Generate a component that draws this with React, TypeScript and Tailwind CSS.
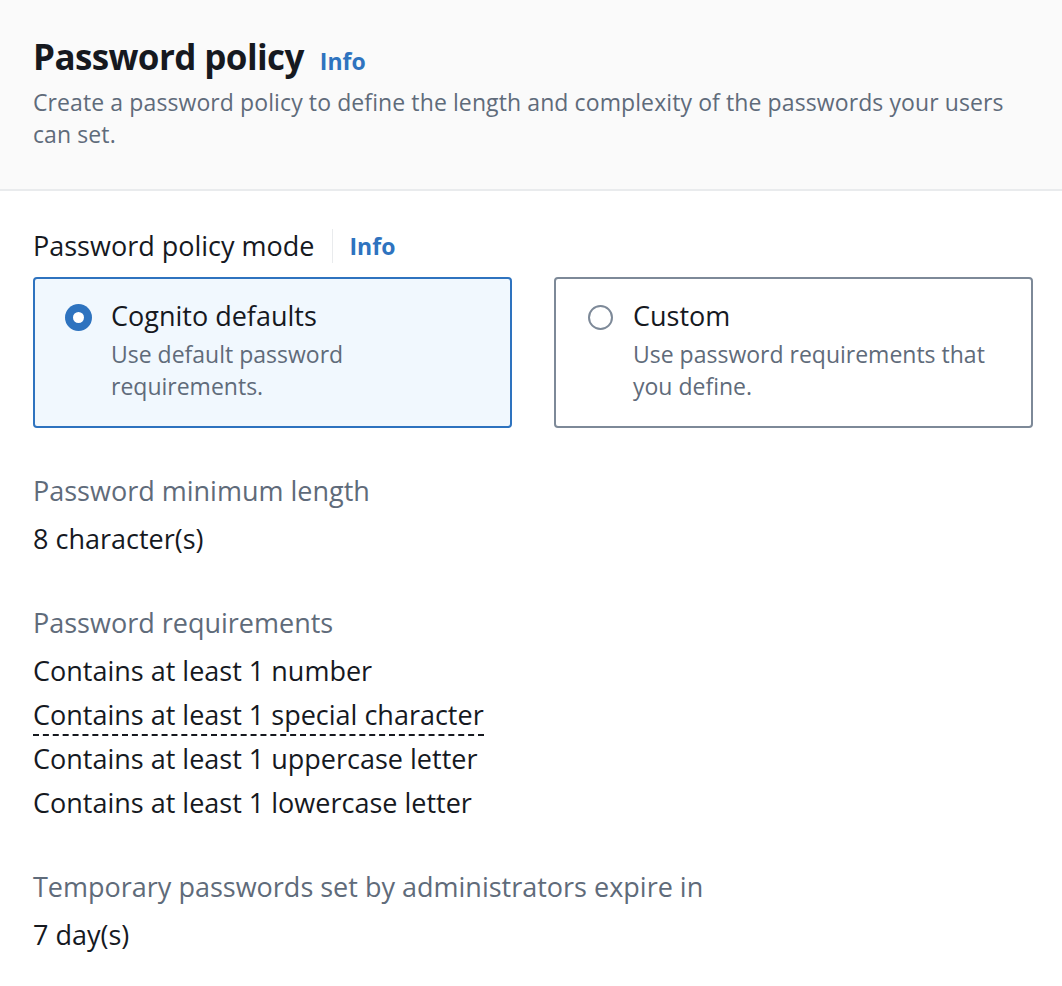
export default function App() {
    return (
        <div
            className="w-[1062px] min-h-[986px] bg-white text-[#16191f]"
            style={{ fontFamily: '"Open Sans", "Noto Sans", sans-serif' }}
        >
            {/* ── Header ── */}
            <header className="bg-[#fafafa] border-b-2 border-[#e9ebed] pl-[33px] pr-[29px] pt-[33px] pb-[39px]">
                <div className="flex items-baseline gap-[16px]">
                    <h1 className="text-[35px] leading-[48px] font-bold tracking-[-0.6px]">
                        Password policy
                    </h1>
                    <span className="text-[23px] font-bold text-[#2e73bf]">Info</span>
                </div>
                <p className="text-[23px] leading-[32px] tracking-[0.1px] text-[#5f6b7a] mt-[5px]">
                    Create a password policy to define the length and complexity of the passwords your users
                    can set.
                </p>
            </header>

            {/* ── Body ── */}
            <main className="pl-[33px] pr-[29px] pt-[33px]">
                {/* Mode label */}
                <div className="flex items-center h-[44px]">
                    <span className="text-[27px]">Password policy mode</span>
                    <span className="w-px h-[34px] bg-[#e9ebed] mx-[17px]" />
                    <span className="text-[23px] font-bold text-[#2e73bf]">Info</span>
                </div>

                {/* Tiles */}
                <div className="grid grid-cols-2 gap-[42px] mt-[9px]">
                    <div className="h-[151px] rounded-[4px] border-2 border-[#2e73bf] bg-[#f1f8fe] flex gap-[19px] pl-[30px] pt-[15px]">
                        <div className="mt-[10px] w-[27px] h-[27px] rounded-full bg-[#2e73bf] flex items-center justify-center shrink-0">
                            <span className="w-[11px] h-[11px] rounded-full bg-white" />
                        </div>
                        <div>
                            <div className="text-[27px] leading-[44px]">Cognito defaults</div>
                            <div className="text-[23px] leading-[32px] text-[#5f6b7a] w-[300px]">
                                Use default password requirements.
                            </div>
                        </div>
                    </div>
                    <div className="h-[151px] rounded-[4px] border-2 border-[#7d8998] bg-white flex gap-[20px] pl-[32px] pt-[15px]">
                        <div className="mt-[11px] w-[25px] h-[25px] rounded-full border-2 border-[#7d8998] shrink-0" />
                        <div>
                            <div className="text-[27px] leading-[44px]">Custom</div>
                            <div className="text-[23px] leading-[32px] text-[#5f6b7a] w-[370px]">
                                Use password requirements that you define.
                            </div>
                        </div>
                    </div>
                </div>

                {/* Minimum length */}
                <section className="mt-[41px]">
                    <div className="text-[27px] leading-[44px] text-[#5f6b7a]">Password minimum length</div>
                    <div className="text-[27px] leading-[44px] mt-[4px]">8 character(s)</div>
                </section>

                {/* Requirements */}
                <section className="mt-[40px]">
                    <div className="text-[27px] leading-[44px] text-[#5f6b7a]">Password requirements</div>
                    <div className="mt-[4px] text-[27px] leading-[44px]">
                        <div>Contains at least 1 number</div>
                        <div>
                            <span className="border-b-2 border-dashed border-[#16191f] pb-[1px]">
                                Contains at least 1 special character
                            </span>
                        </div>
                        <div>Contains at least 1 uppercase letter</div>
                        <div>Contains at least 1 lowercase letter</div>
                    </div>
                </section>

                {/* Temporary passwords */}
                <section className="mt-[40px]">
                    <div className="text-[27px] leading-[44px] text-[#5f6b7a]">
                        Temporary passwords set by administrators expire in
                    </div>
                    <div className="text-[27px] leading-[44px] mt-[4px]">7 day(s)</div>
                </section>
            </main>
        </div>
    );
}
